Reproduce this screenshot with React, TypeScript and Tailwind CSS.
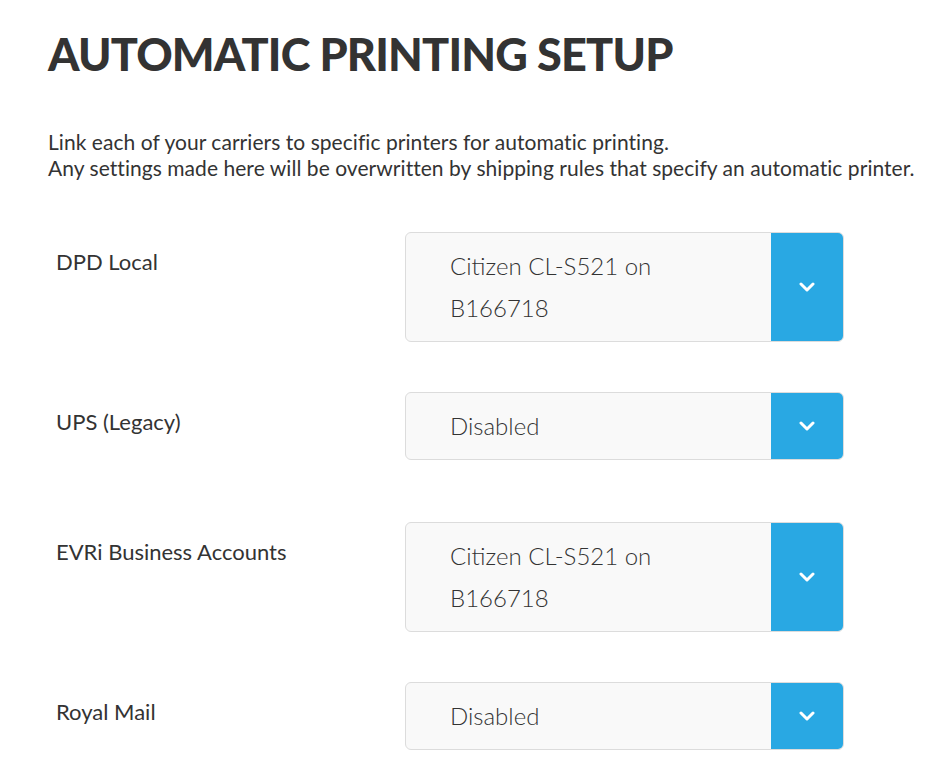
import React from "react";

const rows: { label: string; lines: string[] }[] = [
  { label: "DPD Local", lines: ["Citizen CL-S521 on", "B166718"] },
  { label: "UPS (Legacy)", lines: ["Disabled"] },
  { label: "EVRi Business Accounts", lines: ["Citizen CL-S521 on", "B166718"] },
  { label: "Royal Mail", lines: ["Disabled"] },
];

function Chevron() {
  return (
    <svg width="16" height="10" viewBox="0 0 16 10" fill="none">
      <path d="M2 2 L8 8 L14 2" stroke="#ffffff" strokeWidth="3" strokeLinecap="round" strokeLinejoin="round" />
    </svg>
  );
}

export default function App() {
  return (
    <div className="w-[928px] min-h-[782px] bg-white text-[#333333] pl-[48px] pt-[26px] font-['Lato','Noto_Sans',sans-serif] overflow-hidden">
      <h1 className="text-[45px] leading-[56px] font-black tracking-[-0.8px] text-[#333333] m-0">
        AUTOMATIC PRINTING SETUP
      </h1>
      <div className="mt-[47px] text-[21px] leading-[26px] tracking-[0.05px] text-[#333333] whitespace-nowrap">
        <div>Link each of your carriers to specific printers for automatic printing.</div>
        <div>Any settings made here will be overwritten by shipping rules that specify an automatic printer.</div>
      </div>
      <div className="mt-[51px] flex flex-col gap-[50px]">
        {rows.map((r, i) => (
          <div key={i} className="flex min-h-[80px] items-start">
            <div className="w-[357px] pl-[8px] pt-[16px] text-[22px] leading-[28px] text-[#333333]">
              {r.label}
            </div>
            <div className="flex w-[439px] rounded-[6px] border border-[#dcdcdc] bg-[#f9f9f9] overflow-hidden">
              <div className="flex-1 pl-[44px] py-[12px] text-[24px] leading-[42px] font-light text-[#333333]">
                {r.lines.map((l, j) => (
                  <div key={j}>{l}</div>
                ))}
              </div>
              <div className="w-[72px] bg-[#29a8e3] flex items-center justify-center">
                <Chevron />
              </div>
            </div>
          </div>
        ))}
      </div>
    </div>
  );
}
